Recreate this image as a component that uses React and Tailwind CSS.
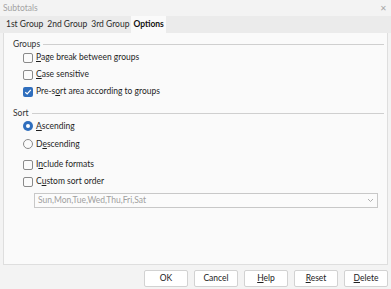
import { useState } from "react";

const font = { fontFamily: 'Lato, "Open Sans", sans-serif' };

function Check({ label, u, checked }) {
  // u = index of the underlined mnemonic letter
  return (
    <div className="flex items-center h-[17px] gap-[3px]">
      {checked ? (
        <span className="w-[10px] h-[10px] rounded-[2px] bg-[#2f6ebd] flex items-center justify-center">
          <svg width="8" height="8" viewBox="0 0 8 8">
            <path d="M1.3 4.2 L3.2 6 L6.8 1.8" stroke="white" strokeWidth="1.2" fill="none" />
          </svg>
        </span>
      ) : (
        <span className="w-[10px] h-[10px] rounded-[2px] border border-[#8a8a8a] bg-[#fbfbfb]" />
      )}
      <Label text={label} u={u} />
    </div>
  );
}

function Radio({ label, u, checked }) {
  return (
    <div className="flex items-center h-[18px] gap-[3px]">
      {checked ? (
        <span className="w-[10px] h-[10px] rounded-full bg-[#2f6ebd] flex items-center justify-center">
          <span className="w-[4px] h-[4px] rounded-full bg-white" />
        </span>
      ) : (
        <span className="w-[10px] h-[10px] rounded-full border border-[#8a8a8a] bg-[#fbfbfb]" />
      )}
      <Label text={label} u={u} />
    </div>
  );
}

function Label({ text, u }) {
  if (u === undefined) return <span>{text}</span>;
  return (
    <span>
      {text.slice(0, u)}
      <span className="underline underline-offset-1">{text[u]}</span>
      {text.slice(u + 1)}
    </span>
  );
}

function Section({ title, children }) {
  return (
    <div>
      <div className="flex items-center gap-[3px] h-[10px]">
        <span className="text-[#333]">{title}</span>
        <span className="flex-1 h-px bg-[#cfcfcf]" />
      </div>
      <div className="pl-[10px]">{children}</div>
    </div>
  );
}

function Btn({ label, u }) {
  return (
    <button className="w-[44px] h-[17px] bg-white border border-[#d2d2d2] rounded-[2px] text-[#222] flex items-center justify-center">
      <Label text={label} u={u} />
    </button>
  );
}

export default function App() {
  const [tab] = useState("Options");
  const tabs = ["1st Group", "2nd Group", "3rd Group", "Options"];

  return (
    <div className="w-[391px] h-[289px] bg-[#f3f3f3] text-[8.5px] text-[#1e1e1e] flex flex-col overflow-hidden" style={font}>
      {/* title bar */}
      <div className="h-[16px] flex items-center justify-between pl-[3px] pr-[4px]">
        <span className="text-[#a3a3a3]">Subtotals</span>
        <span className="text-[#a8a8a8] text-[8px]">✕</span>
      </div>

      {/* tabs */}
      <div className="h-[17px] bg-[#ebebeb] flex items-stretch pl-[4px]">
        {tabs.map((t) => (
          <div
            key={t}
            className={
              t === tab
                ? "px-[2px] flex items-center bg-[#fafafa] font-bold text-[#111]"
                : "px-[2px] flex items-center text-[#2a2a2a]"
            }
          >
            {t}
          </div>
        ))}
      </div>

      {/* options page */}
      <div className="h-[232px] mx-[3px] bg-[#fafafa] border border-t-0 border-[#dedede] pl-[9px] pr-[3px] pt-[6px]">
        <Section title="Groups">
          <Check label="Page break between groups" u={0} />
          <Check label="Case sensitive" u={0} />
          <Check label="Pre-sort area according to groups" u={5} checked />
        </Section>
        <div className="h-[8px]" />
        <Section title="Sort">
          <div className="-mt-[1px]" />
          <Radio label="Ascending" u={0} checked />
          <Radio label="Descending" u={1} />
          <div className="h-[3px]" />
          <Check label="Include formats" u={1} />
          <Check label="Custom sort order" u={1} />
          <div className="ml-[11px] mr-[6px] mt-[3px] h-[15px] border border-[#c8c8c8] bg-[#fbfbfb] flex items-center justify-between pl-[3px] pr-[3px]">
            <span className="text-[#a0a0a0]">Sun,Mon,Tue,Wed,Thu,Fri,Sat</span>
            <svg width="7" height="5" viewBox="0 0 7 5">
              <path d="M1 1 L3.5 3.5 L6 1" stroke="#b0b0b0" fill="none" />
            </svg>
          </div>
        </Section>
      </div>

      {/* buttons */}
      <div className="flex-1 flex items-center justify-end gap-[6px] pr-[3px] pt-[2px]">
        <Btn label="OK" />
        <Btn label="Cancel" />
        <Btn label="Help" u={0} />
        <Btn label="Reset" u={0} />
        <Btn label="Delete" u={0} />
      </div>
    </div>
  );
}
